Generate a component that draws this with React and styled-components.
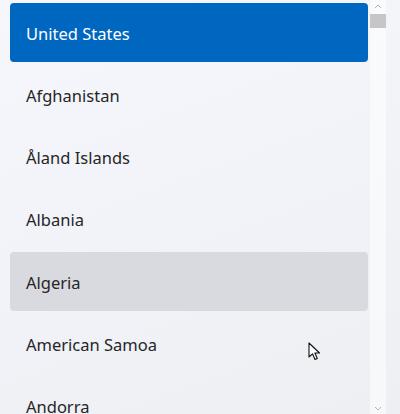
import React from "react";
import styled, { createGlobalStyle } from "styled-components";

const countries = [
  "United States",
  "Afghanistan",
  "Åland Islands",
  "Albania",
  "Algeria",
  "American Samoa",
  "Andorra",
];

const GlobalStyle = createGlobalStyle`
  html, body {
    margin: 0;
    padding: 0;
    overflow: hidden;
  }
  body {
    font-family: "Segoe UI", "Noto Sans", "Open Sans", sans-serif;
  }
  * {
    box-sizing: border-box;
  }
`;

const App = () => {
  return (
    <Page>
      <GlobalStyle />
      <List>
        {countries.map((name, i) => (
          <Item key={name} selected={i === 0} hovered={i === 4}>
            {name}
          </Item>
        ))}
      </List>
      <ScrollBar>
        <Arrow>
          <svg width="8" height="5" viewBox="0 0 8 5">
            <path d="M1 4 L4 1 L7 4" fill="none" stroke="#b5b5b5" strokeWidth="1" />
          </svg>
        </Arrow>
        <Track>
          <Thumb />
        </Track>
        <Arrow>
          <svg width="8" height="5" viewBox="0 0 8 5">
            <path d="M1 1 L4 4 L7 1" fill="none" stroke="#b5b5b5" strokeWidth="1" />
          </svg>
        </Arrow>
      </ScrollBar>
      {/* mouse pointer in the screenshot */}
      <Pointer width="14" height="20" viewBox="0 0 14 20">
        <path
          d="M1 1 L1 15 L4.5 11.8 L7 17.5 L9.3 16.5 L6.9 11 L11.5 11 Z"
          fill="#fff"
          stroke="#111"
          strokeWidth="1.1"
          strokeLinejoin="round"
        />
      </Pointer>
    </Page>
  );
};

export default App;

// Styled components
const Page = styled.div`
  position: relative;
  display: flex;
  width: 400px;
  height: 414px;
  overflow: hidden;
  background: linear-gradient(160deg, #f5f7fc 0%, #f1f3f8 50%, #edeff3 100%);
`;

const List = styled.div`
  flex: 1;
  display: flex;
  flex-direction: column;
  gap: 3.3px;
  padding: 3px 0 0 10px;
  overflow: hidden;
`;

const Item = styled.div`
  flex: 0 0 59px;
  display: flex;
  align-items: center;
  padding: 1px 0 0 16px;
  border-radius: 4px;
  font-size: 16.5px;
  color: ${({ selected }) => (selected ? "#ffffff" : "#262626")};
  background: ${({ selected, hovered }) =>
    selected ? "#0067c0" : hovered ? "#d9dadf" : "transparent"};
`;

const ScrollBar = styled.div`
  flex: 0 0 16px;
  display: flex;
  flex-direction: column;
  margin: 0 14px 0 2px;
  background: rgba(255, 255, 255, 0.55);
`;

const Arrow = styled.div`
  flex: 0 0 12px;
  display: flex;
  align-items: center;
  justify-content: center;
`;

const Track = styled.div`
  flex: 1;
  padding: 2px 0 0;
`;

const Thumb = styled.div`
  height: 14px;
  background: #c6c6c6;
`;

const Pointer = styled.svg`
  position: absolute;
  left: 308px;
  top: 342px;
`;
